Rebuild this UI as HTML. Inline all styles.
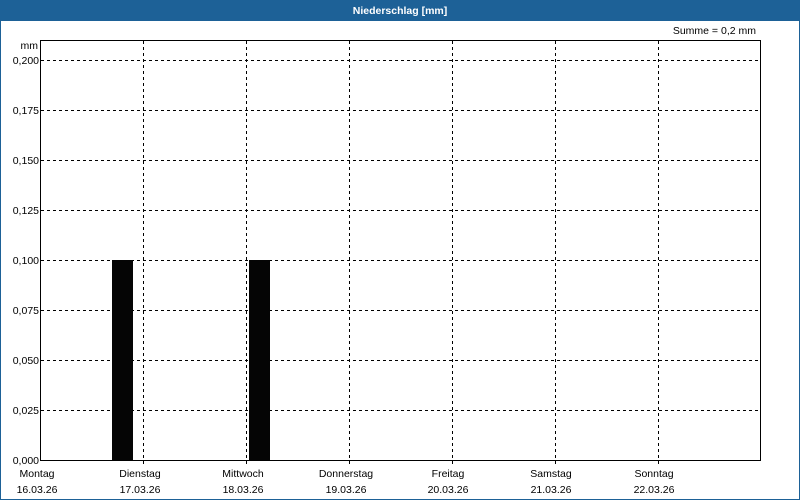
<!DOCTYPE html>
<html><head><style>
html,body{margin:0;padding:0;width:800px;height:500px;overflow:hidden;background:#fff}
svg{display:block}
text{font-family:"Liberation Sans",sans-serif;font-size:10.5px;fill:#000}
</style></head><body>
<svg width="800" height="500" xmlns="http://www.w3.org/2000/svg">
<rect x="0" y="0" width="800" height="500" fill="#fff"/>
<rect x="0" y="0" width="800" height="21" fill="#1d6197"/>
<rect x="0.5" y="0.5" width="799" height="499" fill="none" stroke="#1d6197" stroke-width="1"/>
<text x="400" y="14" text-anchor="middle" style="fill:#fff;font-weight:bold;font-size:10.5px">Niederschlag [mm]</text>
<text x="756" y="34" text-anchor="end">Summe = 0,2 mm</text>
<text x="38" y="49" text-anchor="end">mm</text>
<g stroke="#000" stroke-width="1" stroke-dasharray="3,3">
<line x1="41" y1="60.5" x2="760" y2="60.5"/>
<line x1="41" y1="110.5" x2="760" y2="110.5"/>
<line x1="41" y1="160.5" x2="760" y2="160.5"/>
<line x1="41" y1="210.5" x2="760" y2="210.5"/>
<line x1="41" y1="260.5" x2="760" y2="260.5"/>
<line x1="41" y1="310.5" x2="760" y2="310.5"/>
<line x1="41" y1="360.5" x2="760" y2="360.5"/>
<line x1="41" y1="410.5" x2="760" y2="410.5"/>
<line x1="143.5" y1="41" x2="143.5" y2="466"/>
<line x1="246.5" y1="41" x2="246.5" y2="466"/>
<line x1="349.5" y1="41" x2="349.5" y2="466"/>
<line x1="452.5" y1="41" x2="452.5" y2="466"/>
<line x1="555.5" y1="41" x2="555.5" y2="466"/>
<line x1="658.5" y1="41" x2="658.5" y2="466"/>
</g>
<rect x="112" y="260" width="21" height="200" fill="#050505"/>
<rect x="249" y="260" width="21" height="200" fill="#050505"/>
<rect x="40.5" y="40.5" width="720" height="420" fill="none" stroke="#000" stroke-width="1"/>
<g text-anchor="end">
<text x="39" y="64">0,200</text><text x="39" y="114">0,175</text><text x="39" y="164">0,150</text>
<text x="39" y="214">0,125</text><text x="39" y="264">0,100</text><text x="39" y="314">0,075</text>
<text x="39" y="364">0,050</text><text x="39" y="414">0,025</text><text x="39" y="464">0,000</text>
</g>
<g text-anchor="middle">
<text x="37" y="477">Montag</text><text x="37" y="493">16.03.26</text>
<text x="140" y="477">Dienstag</text><text x="140" y="493">17.03.26</text>
<text x="243" y="477">Mittwoch</text><text x="243" y="493">18.03.26</text>
<text x="346" y="477">Donnerstag</text><text x="346" y="493">19.03.26</text>
<text x="448" y="477">Freitag</text><text x="448" y="493">20.03.26</text>
<text x="551" y="477">Samstag</text><text x="551" y="493">21.03.26</text>
<text x="654" y="477">Sonntag</text><text x="654" y="493">22.03.26</text>
</g>
</svg>
</body></html>
